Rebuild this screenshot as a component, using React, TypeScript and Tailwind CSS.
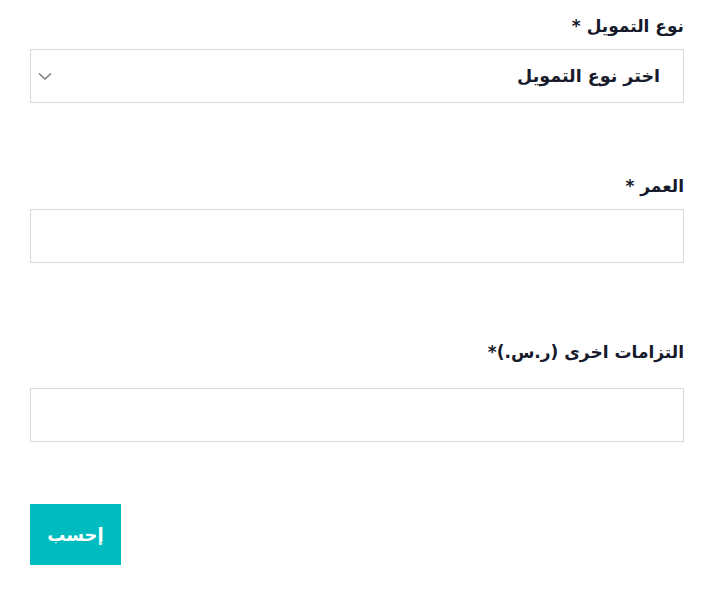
import { useState } from "react";

const font = { fontFamily: '"DejaVu Sans", "Noto Sans", sans-serif' };

function Label({ children, className = "" }: { children: React.ReactNode; className?: string }) {
  return (
    <label className={`block text-[17px] leading-[24px] font-bold text-[#161a2b] ${className}`}>
      {children}
    </label>
  );
}

export default function App() {
  const [type, setType] = useState("");
  return (
    <div dir="rtl" style={font} className="w-[702px] h-[597px] bg-white pt-[14px]">
      <form className="flex flex-col w-[654px] mr-[18px]" onSubmit={(e) => e.preventDefault()}>
        {/* نوع التمويل */}
        <Label className="mb-[11px]">نوع التمويل *</Label>
        <div className="relative">
          <select
            value={type}
            onChange={(e) => setType(e.target.value)}
            style={font}
            className="appearance-none w-full h-[54px] border border-[#d9d9d9] bg-white pr-[23px] text-[17.5px] font-bold text-[#161a2b] outline-none"
          >
            <option value="">اختر نوع التمويل</option>
            <option value="personal">تمويل شخصي</option>
            <option value="real-estate">تمويل عقاري</option>
          </select>
          <svg
            className="absolute left-[8px] top-1/2 -translate-y-1/2 w-[14px] h-[14px] pointer-events-none"
            viewBox="0 0 14 14"
            fill="none"
            stroke="#7a7a7a"
            strokeWidth="1.6"
          >
            <path d="M1 4.5 L7 10 L13 4.5" />
          </svg>
        </div>

        {/* العمر */}
        <Label className="mt-[71px] mb-[11px]">العمر *</Label>
        <input type="text" className="w-full h-[54px] border border-[#d9d9d9] bg-white px-4 outline-none" />

        {/* التزامات اخرى */}
        <Label className="mt-[77px] mb-[24px]">التزامات اخرى (ر.س.)*</Label>
        <input type="text" className="w-full h-[54px] border border-[#d9d9d9] bg-white px-4 outline-none" />

        <div className="mt-[62px] flex">
          <button
            type="submit"
            style={font}
            className="mr-auto w-[91px] h-[61px] bg-[#00bcbf] text-white text-[18px] font-bold"
          >
            إحسب
          </button>
        </div>
      </form>
    </div>
  );
}
